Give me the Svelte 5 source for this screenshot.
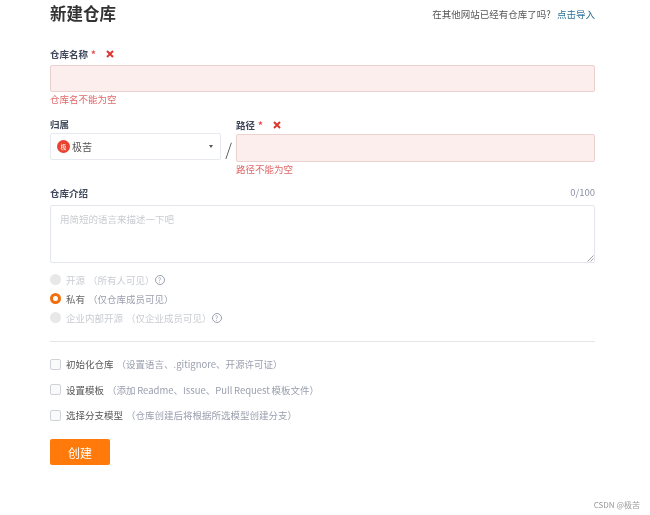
<script>
  const visibility = [
    { label: '开源', note: '（所有人可见）', help: true, disabled: true },
    { label: '私有', note: '（仅仓库成员可见）', checked: true },
    { label: '企业内部开源', note: '（仅企业成员可见）', help: true, disabled: true }
  ];

  const options = [
    { label: '初始化仓库', note: '（设置语言、.gitignore、开源许可证）' },
    { label: '设置模板', note: '（添加 Readme、Issue、Pull Request 模板文件）' },
    { label: '选择分支模型', note: '（仓库创建后将根据所选模型创建分支）' }
  ];
</script>

<main class="page">
  <header class="head">
    <h1>新建仓库</h1>
    <p class="import">在其他网站已经有仓库了吗? <a href="#import">点击导入</a></p>
  </header>

  <section class="field name-field">
    <div class="label">
      仓库名称 <span class="req">*</span>
      <svg class="cross" viewBox="0 0 8 8"><path d="M1 1l6 6M7 1L1 7" /></svg>
    </div>
    <div class="input error"></div>
    <div class="msg">仓库名不能为空</div>
  </section>

  <section class="path-row">
    <div class="owner">
      <div class="label owner-label">归属</div>
      <div class="select">
        <span class="avatar">极</span>
        <span class="owner-name">极苦</span>
        <span class="caret"></span>
      </div>
    </div>
    <span class="slash">/</span>
    <div class="path">
      <div class="label">
        路径 <span class="req">*</span>
        <svg class="cross" viewBox="0 0 8 8"><path d="M1 1l6 6M7 1L1 7" /></svg>
      </div>
      <div class="input error path-input"></div>
      <div class="msg">路径不能为空</div>
    </div>
  </section>

  <section class="field desc">
    <div class="desc-head">
      <span class="label">仓库介绍</span>
      <span class="count">0/100</span>
    </div>
    <div class="textarea">
      用简短的语言来描述一下吧
      <svg class="grip" viewBox="0 0 8 8"><path d="M7.5 1.5l-6 6M7.5 4.5l-3 3" /></svg>
    </div>
  </section>

  <section class="radios">
    {#each visibility as item}
      <div class="radio-row" class:disabled={item.disabled}>
        <span class="radio" class:checked={item.checked}></span>
        <span class="opt-label">{item.label}</span>
        <span class="opt-note">{item.note}</span>
        {#if item.help}<span class="help">?</span>{/if}
      </div>
    {/each}
  </section>

  <hr />

  <section class="checks">
    {#each options as item}
      <div class="check-row">
        <span class="box"></span>
        <span class="opt-label">{item.label}</span>
        <span class="opt-note">{item.note}</span>
      </div>
    {/each}
  </section>

  <button class="create">创建</button>

  <footer class="mark">CSDN @极苦</footer>
</main>

<style>
  :global(body) {
    margin: 0;
    background: #fff;
  }

  .page {
    position: relative;
    box-sizing: border-box;
    width: 650px;
    height: 515px;
    padding: 0 55px 0 50px;
    overflow: hidden;
    font-family: "Noto Sans CJK SC", "Liberation Sans", sans-serif;
    color: #40485b;
    font-size: 10px;
    line-height: 14px;
    filter: blur(0.4px);
  }

  .head {
    display: flex;
    justify-content: space-between;
    align-items: center;
    height: 28px;
  }

  h1 {
    margin: 0 0 2px;
    font-size: 16.5px;
    font-weight: 600;
    color: #333;
  }

  .import {
    margin: 0;
    font-size: 9.5px;
    color: #555;
  }

  .import a {
    color: #2a6f97;
    text-decoration: none;
    margin-left: 4px;
  }

  .label {
    font-size: 9.5px;
    font-weight: 600;
    line-height: 14px;
    color: #40485b;
    display: flex;
    align-items: center;
    gap: 3px;
  }

  .req {
    color: #e5484d;
  }

  .cross {
    width: 8px;
    height: 8px;
    margin-left: 7px;
  }

  .cross path {
    stroke: #d9372f;
    stroke-width: 2;
    fill: none;
  }

  .name-field {
    margin-top: 19px;
  }

  .input {
    box-sizing: border-box;
    height: 27px;
    margin-top: 4px;
    border: 1px solid #dfe3e9;
    border-radius: 2px;
  }

  .input.error {
    background: #fdeeee;
    border-color: #ecd0d0;
  }

  .msg {
    color: #e0686a;
    font-size: 9.5px;
    line-height: 14px;
  }

  .path-row {
    display: flex;
    margin-top: 11px;
  }

  .owner {
    width: 171px;
    flex: none;
  }

  .owner-label {
    height: 14px;
    margin-bottom: 2px;
  }

  .select {
    box-sizing: border-box;
    height: 27px;
    display: flex;
    align-items: center;
    padding: 0 7px 0 6px;
    border: 1px solid #e6e9ed;
    border-radius: 2px;
    color: #555;
  }

  .avatar {
    width: 13px;
    height: 13px;
    border-radius: 50%;
    background: #e8432e;
    color: #fff;
    font-size: 6px;
    line-height: 13px;
    text-align: center;
  }

  .owner-name {
    margin-left: 2px;
    font-size: 10px;
  }

  .caret {
    margin-left: auto;
    border: 2.5px solid transparent;
    border-top: 3px solid #555;
    border-bottom: 0;
  }

  .slash {
    width: 15px;
    flex: none;
    padding-top: 17px;
    text-align: center;
    font-size: 17px;
    line-height: 30px;
    color: #444;
    font-weight: 300;
  }

  .path {
    flex: 1;
    padding-top: 1px;
  }

  .path-input {
    height: 28px;
    margin-top: 2px;
  }

  .desc {
    margin-top: 10px;
  }

  .desc-head {
    display: flex;
    justify-content: space-between;
    align-items: center;
    height: 14px;
  }

  .count {
    color: #8c92a4;
    font-size: 9.5px;
    margin-bottom: 2px;
  }

  .textarea {
    position: relative;
    box-sizing: border-box;
    height: 58px;
    margin-top: 5px;
    padding: 6px 9px;
    border: 1px solid #e3e6ea;
    border-radius: 2px;
    color: #c9ccd2;
    font-size: 9.5px;
  }

  .grip {
    position: absolute;
    right: 0;
    bottom: 0;
    width: 8px;
    height: 8px;
  }

  .grip path {
    stroke: #777;
    stroke-width: 0.7;
    fill: none;
  }

  .radios {
    margin-top: 7px;
    display: flex;
    flex-direction: column;
  }

  .radio-row {
    display: flex;
    align-items: center;
    height: 19px;
    color: #666;
  }

  .radio-row.disabled {
    color: #c9ccd2;
  }

  .radio {
    box-sizing: border-box;
    width: 11px;
    height: 11px;
    border-radius: 50%;
    background: #e8e8e8;
    margin-right: 5px;
  }

  .radio.checked {
    background: #fff;
    border: 3px solid #f26f0f;
  }

  .opt-label {
    font-size: 9.5px;
  }

  .opt-note {
    margin-left: 3px;
    font-size: 9.5px;
    color: #9a9fae;
    word-spacing: -0.5px;
  }

  .radio-row.disabled .opt-note {
    color: #c9ccd2;
  }

  .help {
    box-sizing: border-box;
    width: 10px;
    height: 10px;
    margin-left: 0;
    border: 1px solid #9aa0ac;
    border-radius: 50%;
    color: #9aa0ac;
    font-size: 7px;
    line-height: 8px;
    text-align: center;
  }

  hr {
    margin: 14px 0 0;
    border: 0;
    border-top: 1px solid #e6e6e6;
  }

  .checks {
    margin-top: 12.5px;
    display: flex;
    flex-direction: column;
    gap: 6.5px;
  }

  .check-row {
    display: flex;
    align-items: center;
    height: 19px;
    color: #555;
  }

  .box {
    box-sizing: border-box;
    width: 11px;
    height: 11px;
    margin-right: 5px;
    border: 1px solid #cfd2d8;
    border-radius: 2px;
    background: #fafafa;
  }

  .create {
    display: block;
    width: 60px;
    height: 26px;
    margin-top: 14.5px;
    padding: 0;
    border: 0;
    border-radius: 2px;
    background: #ff7a0a;
    color: #fff;
    font-family: inherit;
    font-size: 12px;
  }

  .mark {
    position: absolute;
    right: 10px;
    bottom: 3px;
    font-size: 8px;
    color: #999;
  }
</style>
